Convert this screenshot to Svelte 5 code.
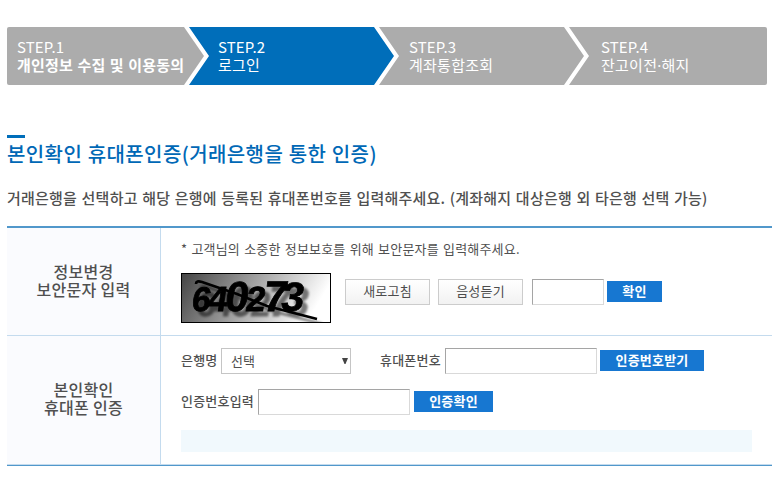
<script>
  const steps = [
    { no: 'STEP.1', name: '개인정보 수집 및 이용동의', strong: true },
    { no: 'STEP.2', name: '로그인', active: true },
    { no: 'STEP.3', name: '계좌통합조회' },
    { no: 'STEP.4', name: '잔고이전·해지' }
  ];
</script>

<main>
  <ol class="steps">
    {#each steps as step}
      <li class:active={step.active}>
        <span class="no">{step.no}</span>
        <span class="name" class:strong={step.strong}>{step.name}</span>
      </li>
    {/each}
  </ol>

  <h1>본인확인 휴대폰인증(거래은행을 통한 인증)</h1>
  <p class="desc">거래은행을 선택하고 해당 은행에 등록된 휴대폰번호를 입력해주세요. (계좌해지 대상은행 외 타은행 선택 가능)</p>

  <div class="form">
    <section class="row first">
      <div class="head">정보변경<br />보안문자 입력</div>
      <div class="body">
        <p class="note">* 고객님의 소중한 정보보호를 위해 보안문자를 입력해주세요.</p>
        <div class="line captcha-line">
          <svg class="captcha" width="150" height="50" viewBox="0 0 150 50">
            <defs>
              <linearGradient id="shade" x1="0" y1="0" x2="1" y2="0.2">
                <stop offset="0" stop-color="#444" />
                <stop offset="1" stop-color="#fff" />
              </linearGradient>
              <filter id="cast" x="-10%" y="-20%" width="130%" height="160%">
                <feDropShadow dx="5" dy="5" stdDeviation="1.3" flood-color="#000" flood-opacity="0.5" />
              </filter>
            </defs>
            <rect x="0.5" y="0.5" width="149" height="49" fill="url(#shade)" stroke="#000" />
            <g filter="url(#cast)">
              <text y="38" transform="translate(9 0) skewX(-8)" stroke="#000" stroke-width="0.8"><tspan x="6" font-size="34">6</tspan><tspan x="22" font-size="35">4</tspan><tspan x="39" font-size="42">0</tspan><tspan x="60" font-size="35">2</tspan><tspan x="77" font-size="43">7</tspan><tspan x="95" font-size="41">3</tspan></text>
              <path d="M15 11 Q15 7 21 9 L56 21 L86 33 L136 46" fill="none" stroke="#000" stroke-width="2.7" />
            </g>
          </svg>
          <button class="plain refresh">새로고침</button>
          <button class="plain listen">음성듣기</button>
          <input class="code" aria-label="보안문자" />
          <button class="blue ok">확인</button>
        </div>
      </div>
    </section>
    <section class="row second">
      <div class="head">본인확인<br />휴대폰 인증</div>
      <div class="body">
        <div class="line">
          <span class="label bank">은행명</span>
          <div class="select"><span>선택</span><svg width="6" height="6" viewBox="0 0 6 6"><path d="M0 0H6L3.5 6H2.5Z" fill="#444" /></svg></div>
          <span class="label phone">휴대폰번호</span>
          <input class="wide" aria-label="휴대폰번호" />
          <button class="blue send">인증번호받기</button>
        </div>
        <div class="line auth">
          <span class="label number">인증번호입력</span>
          <input class="wide" aria-label="인증번호입력" />
          <button class="blue verify">인증확인</button>
        </div>
        <div class="message"></div>
      </div>
    </section>
  </div>
</main>

<style>
  :global(body) { background: #fff; }
  main {
    box-sizing: border-box;
    width: 778px;
    height: 482px;
    padding: 27px 6px 0 7px;
    overflow: hidden;
    color: #505050;
    font-family: "Noto Sans CJK KR", sans-serif;
  }
  p, h1, ol { margin: 0; padding: 0; }
  p, h1, .label, .name, .no { white-space: nowrap; }
  .steps { display: flex; width: 760px; height: 58px; list-style: none; border-radius: 2px; overflow: hidden; }
  li {
    box-sizing: border-box;
    display: flex;
    flex: none;
    flex-direction: column;
    width: 205px;
    margin-right: -15px;
    padding: 11px 0 0 30px;
    background: #acacac;
    color: #fff;
    font-size: 15px;
    line-height: 18px;
    clip-path: polygon(0 0, 185px 0, 100% 50%, 185px 100%, 0 100%, 20px 50%);
  }
  li:first-child { width: 197px; padding-left: 10px; clip-path: polygon(0 0, 177px 0, 100% 50%, 177px 100%, 0 100%); }
  li:last-child { width: 198px; margin-right: 0; padding-left: 32px; clip-path: polygon(0 0, 100% 0, 100% 100%, 0 100%, 20px 50%); }
  li.active { padding-left: 29px; background: #006eba; }
  .no { letter-spacing: 0.1px; }
  .name { font-family: "Noto Sans", "Noto Sans CJK KR", sans-serif; letter-spacing: 0.25px; }
  .strong { font-family: "Noto Sans CJK KR", sans-serif; font-weight: 700; letter-spacing: 0.2px; word-spacing: 0.8px; }
  h1 {
    margin-top: 50px;
    color: #0068b6;
    font-size: 20px;
    font-weight: 500;
    line-height: 31px;
    letter-spacing: 0.4px;
    word-spacing: 0.6px;
  }
  h1::before { content: ''; display: block; width: 18px; height: 3px; background: #006eba; }
  .desc { margin-top: 14px; font-size: 15px; font-weight: 500; line-height: 30px; letter-spacing: 0.22px; word-spacing: 0.9px; }
  .form { width: 765px; margin-top: 13px; border-top: 2px solid #5198cb; border-bottom: 1px solid #5198cb; }
  .row { display: flex; border-bottom: 1px solid #c4dbee; }
  .first { height: 107px; }
  .second { height: 128px; }
  .head {
    box-sizing: border-box;
    display: flex;
    align-items: center;
    justify-content: center;
    width: 154px;
    padding-bottom: 4px;
    border-right: 1px solid #c4dbee;
    background: #fafbfe;
    font-size: 16px;
    font-weight: 500;
    line-height: 18px;
    letter-spacing: 0.3px;
    text-align: center;
  }
  .body { flex: 1; padding-left: 20px; }
  .note { padding-top: 12px; font-size: 13px; line-height: 18px; letter-spacing: 0.2px; word-spacing: 1px; }
  .line { display: flex; align-items: center; height: 26px; font-size: 13px; }
  .captcha-line { align-items: flex-start; height: 50px; margin-top: 15px; }
  .captcha { flex: none; font-family: "Liberation Sans", sans-serif; font-weight: 700; }
  button, input { box-sizing: border-box; flex: none; margin: 0; padding: 0; border-radius: 0; font: inherit; }
  .plain { width: 85px; height: 26px; padding-bottom: 2px; border: 1px solid #ccc; background: linear-gradient(#fff, #f2f2f2); color: #4c4c4c; line-height: 22px; letter-spacing: 0.2px; }
  .captcha-line > .plain, .captcha-line > input { margin-top: 6px; }
  .captcha-line > .blue { margin-top: 8px; }
  .refresh { margin-left: 14px; }
  .listen { margin-left: 8px; }
  input { height: 26px; border: 1px solid; border-color: #a5a5a5 #d9d9d9 #d9d9d9 #a5a5a5; background: #fff; outline: 0; }
  .code { width: 72px; margin-left: 9px; }
  .wide { width: 152px; }
  .blue { height: 21px; padding-bottom: 1px; border: 0; background: #1777d1; color: #fff; font-weight: 700; line-height: 20px; letter-spacing: 0.2px; }
  .line:not(.captcha-line) > .blue { margin-bottom: 1px; }
  .ok { width: 55px; margin-left: 3px; }
  .second .body { padding-top: 12px; }
  .label { padding-bottom: 3px; font-weight: 500; letter-spacing: 0.2px; line-height: 22px; }
  .bank { width: 40px; }
  .select {
    box-sizing: border-box;
    display: flex;
    align-items: center;
    justify-content: space-between;
    width: 130px;
    height: 26px;
    padding: 0 2px 0 9px;
    border: 1px solid #c5c5c5;
    line-height: 24px;
  }
  .phone { width: 65px; margin-left: 29px; }
  .send { width: 104px; margin-left: 3px; }
  .auth { margin-top: 15px; }
  .number { width: 77px; }
  .verify { width: 79px; margin-left: 4px; }
  .message { width: 571px; height: 22px; margin-top: 15px; background: #f1f9fd; }
</style>
